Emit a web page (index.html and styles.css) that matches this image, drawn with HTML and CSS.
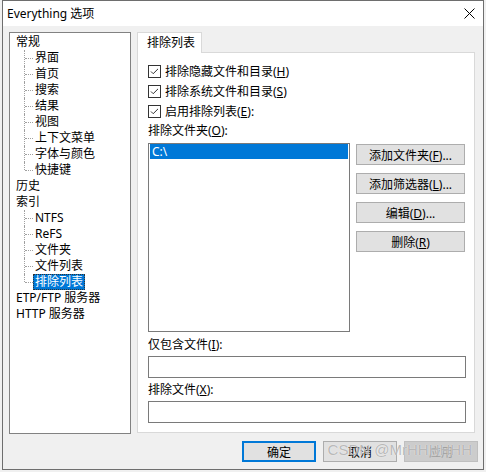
FILE: index.html
```html
<!DOCTYPE html>
<html lang="zh-CN">
<head>
    <meta charset="UTF-8">
    <title>Everything 选项</title>
    <link rel="stylesheet" href="styles.css">
</head>
<body>
    <div class="window">
        <div class="titlebar">
            <span class="title">Everything 选项</span>
            <svg class="close" width="11" height="11" viewBox="0 0 11 11">
                <path d="M0.5 0.5 L10.5 10.5 M10.5 0.5 L0.5 10.5" stroke="#000" stroke-width="1" fill="none"/>
            </svg>
        </div>

        <div class="client">
            <div class="main">
                <ul class="tree">
                    <li class="node">常规
                        <ul class="children">
                            <li>界面</li>
                            <li>首页</li>
                            <li>搜索</li>
                            <li>结果</li>
                            <li>视图</li>
                            <li>上下文菜单</li>
                            <li>字体与颜色</li>
                            <li>快捷键</li>
                        </ul>
                    </li>
                    <li class="node">历史</li>
                    <li class="node">索引
                        <ul class="children">
                            <li>NTFS</li>
                            <li>ReFS</li>
                            <li>文件夹</li>
                            <li>文件列表</li>
                            <li><span class="selected">排除列表</span></li>
                        </ul>
                    </li>
                    <li class="node">ETP/FTP 服务器</li>
                    <li class="node">HTTP 服务器</li>
                </ul>

                <div class="tabs">
                    <div class="tab-strip">
                        <div class="tab">排除列表</div>
                    </div>
                    <div class="tab-panel">
                        <div class="check-row">
                            <svg class="checkbox" width="13" height="13" viewBox="0 0 13 13">
                                <rect x="0.5" y="0.5" width="12" height="12" fill="#fff" stroke="#333"/>
                                <path d="M3 6.5 L5.2 8.7 L10 3.9" stroke="#333" stroke-width="1" fill="none"/>
                            </svg>
                            <span>排除隐藏文件和目录(<u>H</u>)</span>
                        </div>
                        <div class="check-row">
                            <svg class="checkbox" width="13" height="13" viewBox="0 0 13 13">
                                <rect x="0.5" y="0.5" width="12" height="12" fill="#fff" stroke="#333"/>
                                <path d="M3 6.5 L5.2 8.7 L10 3.9" stroke="#333" stroke-width="1" fill="none"/>
                            </svg>
                            <span>排除系统文件和目录(<u>S</u>)</span>
                        </div>
                        <div class="check-row">
                            <svg class="checkbox" width="13" height="13" viewBox="0 0 13 13">
                                <rect x="0.5" y="0.5" width="12" height="12" fill="#fff" stroke="#333"/>
                                <path d="M3 6.5 L5.2 8.7 L10 3.9" stroke="#333" stroke-width="1" fill="none"/>
                            </svg>
                            <span>启用排除列表(<u>E</u>):</span>
                        </div>
                        <div class="field-label">排除文件夹(<u>O</u>):</div>

                        <div class="list-row">
                            <div class="listbox">
                                <div class="list-item selected-row">C:\</div>
                            </div>
                            <div class="side-buttons">
                                <button class="btn">添加文件夹(<u>F</u>)...</button>
                                <button class="btn">添加筛选器(<u>L</u>)...</button>
                                <button class="btn">编辑(<u>D</u>)...</button>
                                <button class="btn">删除(<u>R</u>)</button>
                            </div>
                        </div>

                        <div class="field-label spaced">仅包含文件(<u>I</u>):</div>
                        <input class="textbox" type="text">
                        <div class="field-label">排除文件(<u>X</u>):</div>
                        <input class="textbox" type="text">
                    </div>
                </div>
            </div>

            <div class="footer">
                <button class="btn dialog default">确定</button>
                <button class="btn dialog">取消</button>
                <button class="btn dialog" disabled>应用</button>
                <span class="watermark">CSDN @MrHHHHHH</span>
            </div>
        </div>
    </div>
</body>
</html>
```

FILE: styles.css
```css
* {
    box-sizing: border-box;
}

body {
    margin: 0;
    background-color: #f0f0f0;
    font-family: "Noto Sans", "Noto Sans CJK SC", sans-serif;
    font-size: 12px;
    color: #000;
}

.window {
    width: 482px;
    height: 470px;
    margin-left: 2px;
    border: 1px solid #6e6e6e;
    background-color: #f0f0f0;
    display: flex;
    flex-direction: column;
}

/* title bar */
.titlebar {
    height: 25px;
    background-color: #fff;
    display: flex;
    align-items: center;
    justify-content: space-between;
    padding: 0 8px 0 4px;
}

.title {
    font-size: 12px;
    line-height: 16px;
}

.close {
    display: block;
}

/* client area */
.client {
    flex: 1;
    padding: 6px 5px 0 6px;
    display: flex;
    flex-direction: column;
}

.main {
    display: flex;
    gap: 6px;
    height: 402px;
}

/* tree */
.tree {
    width: 122px;
    height: 402px;
    margin: 0;
    padding: 1px 0 0 0;
    list-style: none;
    background-color: #fff;
    border: 1px solid #828282;
}

.tree .node {
    line-height: 16px;
    padding-left: 6px;
}

.children {
    list-style: none;
    margin: 0 0 0 -6px;
    padding: 0;
}

.children li {
    position: relative;
    height: 16px;
    line-height: 16px;
    padding-left: 25px;
}

.children li::before {
    content: "";
    position: absolute;
    left: 14px;
    top: 0;
    bottom: 0;
    border-left: 1px dotted #a0a0a0;
}

.children li:last-child::before {
    bottom: 8px;
}

.children li::after {
    content: "";
    position: absolute;
    left: 15px;
    top: 8px;
    width: 8px;
    border-top: 1px dotted #a0a0a0;
}

.selected {
    display: inline-block;
    height: 16px;
    line-height: 14px;
    margin-left: -2px;
    padding: 0 1px;
    background-color: #0078d7;
    color: #fff;
    border: 1px dotted #333;
}

/* tab control */
.tabs {
    width: 338px;
    display: flex;
    flex-direction: column;
}

.tab-strip {
    height: 20px;
    display: flex;
}

.tab {
    position: relative;
    z-index: 1;
    height: 21px;
    line-height: 20px;
    padding: 0 6px 0 9px;
    background-color: #fff;
    border: 1px solid #d9d9d9;
    border-bottom: none;
}

.tab-panel {
    height: 381px;
    background-color: #fff;
    border: 1px solid #d9d9d9;
    padding: 8px 8px 0 10px;
}

.check-row {
    height: 20px;
    display: flex;
    align-items: center;
}

.checkbox {
    display: block;
    margin-right: 4px;
}

.field-label {
    height: 20px;
    line-height: 20px;
    margin-top: 2px;
}

.check-row + .field-label {
    margin-top: 0;
}

.field-label.spaced {
    margin-top: 3px;
}

u {
    text-decoration: underline;
}

.list-row {
    display: flex;
    gap: 6px;
    margin-top: 2px;
}

.listbox {
    width: 202px;
    height: 189px;
    border: 1px solid #7a7a7a;
    padding: 0 1px;
}

.list-item {
    height: 15px;
    line-height: 15px;
    padding-left: 2px;
}

.selected-row {
    background-color: #0078d7;
    color: #fff;
}

.side-buttons {
    display: flex;
    flex-direction: column;
    gap: 8px;
    margin-top: 1px;
}

.btn {
    height: 21px;
    padding: 0;
    font-family: "Noto Sans", "Noto Sans CJK SC", sans-serif;
    font-size: 12px;
    color: #000;
    background-color: #e1e1e1;
    border: 1px solid #adadad;
    border-radius: 0;
}

.side-buttons .btn {
    width: 109px;
}

.textbox {
    display: block;
    width: 318px;
    height: 22px;
    margin: 1px 0 0 0;
    border: 1px solid #7a7a7a;
    background-color: #fff;
}

/* dialog buttons */
.footer {
    position: relative;
    display: flex;
    justify-content: flex-end;
    gap: 7px;
    margin-top: 7px;
}

.btn.dialog {
    width: 74px;
}

.btn.default {
    border: 2px solid #0078d7;
}

.btn:disabled {
    background-color: #cccccc;
    border-color: #bfbfbf;
    color: #a0a0a0;
}

.watermark {
    position: absolute;
    right: 6px;
    top: 0;
    font-family: "Liberation Sans", sans-serif;
    font-size: 15px;
    line-height: 18px;
    color: rgba(120, 120, 120, 0.5);
    text-shadow: 0 0 1px #fff;
    pointer-events: none;
}
```
